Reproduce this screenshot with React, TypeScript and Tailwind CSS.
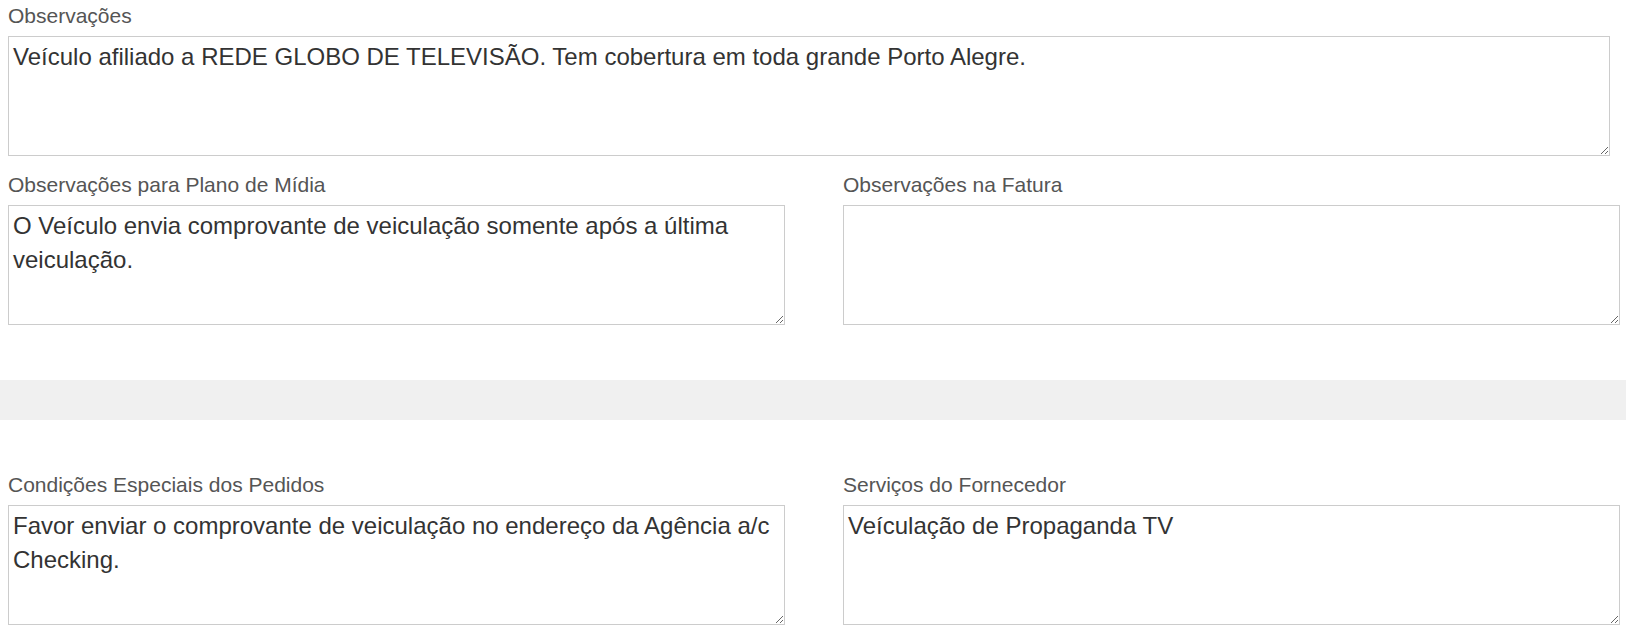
import React from "react";

function Field({
  label,
  value,
  width,
}: {
  label: string;
  value: string;
  width: string;
}) {
  return (
    <div className={width}>
      <label className="block h-[30px] mb-[5px] text-[21px] leading-[30px] text-[#555] whitespace-nowrap">
        {label}
      </label>
      <textarea
        readOnly
        defaultValue={value}
        className="block w-full h-[120px] border border-[#ccc] bg-white pt-[3px] px-[4px] text-[24px] leading-[34px] text-[#333] outline-none resize-y"
        style={{ fontFamily: '"Liberation Sans", Arial, sans-serif' }}
      />
    </div>
  );
}

export default function App() {
  return (
    <div className="w-[1626px] h-[627px] overflow-hidden bg-white font-['Liberation_Sans',Arial,sans-serif]">
      <div className="pl-2 pt-[1px]">
        <Field
          width="w-[1602px]"
          label="Observações"
          value="Veículo afiliado a REDE GLOBO DE TELEVISÃO. Tem cobertura em toda grande Porto Alegre."
        />
        <div className="mt-[14px] grid grid-cols-[777px_777px] gap-x-[58px]">
          <Field
            width="w-[777px]"
            label="Observações para Plano de Mídia"
            value="O Veículo envia comprovante de veiculação somente após a última veiculação."
          />
          <Field width="w-[777px]" label="Observações na Fatura" value="" />
        </div>
      </div>
      <div className="mt-[55px] h-10 bg-[#f0f0f0]" />
      <div className="pl-2 pt-[50px] grid grid-cols-[777px_777px] gap-x-[58px]">
        <Field
          width="w-[777px]"
          label="Condições Especiais dos Pedidos"
          value="Favor enviar o comprovante de veiculação no endereço da Agência a/c Checking."
        />
        <Field
          width="w-[777px]"
          label="Serviços do Fornecedor"
          value="Veículação de Propaganda TV"
        />
      </div>
    </div>
  );
}
